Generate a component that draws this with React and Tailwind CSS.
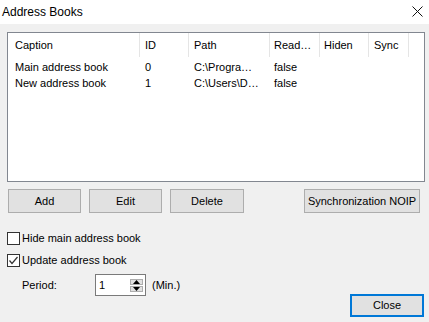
import React from 'react';

const cols = [
  { title: 'Caption', w: 'w-[132px]', pl: 'pl-[7px]' },
  { title: 'ID', w: 'w-[49px]', pl: 'pl-[5px]' },
  { title: 'Path', w: 'w-[81px]', pl: 'pl-[5px]' },
  { title: 'Read…', w: 'w-[50px]', pl: 'pl-[4px]' },
  { title: 'Hiden', w: 'w-[49px]', pl: 'pl-[4px]' },
  { title: 'Sync', w: 'w-[40px]', pl: 'pl-[5px]' },
];

const rows = [
  ['Main address book', '0', 'C:\\Progra…', 'false', '', ''],
  ['New address book', '1', 'C:\\Users\\D…', 'false', '', ''],
];

const Btn = ({ children, className }) => (
  <button className={`flex h-[24px] items-center justify-center border border-[#adadad] bg-[#e1e1e1] text-[11px] text-black ${className}`}>
    {children}
  </button>
);

const Check = ({ checked, label }) => (
  <div className="flex h-[13px] items-center">
    <div className="flex h-[13px] w-[13px] items-center justify-center border border-[#333333] bg-white">
      {checked && (
        <svg width="11" height="11" viewBox="0 0 11 11">
          <path d="M1.5 5.5 L4 8.5 L9.5 2" fill="none" stroke="#333333" strokeWidth="1.2" />
        </svg>
      )}
    </div>
    <span className="ml-[2px] text-[11px] text-black">{label}</span>
  </div>
);

export default function App() {
  return (
    <div className="h-[322px] w-[429px] overflow-hidden bg-[#f0f0f0] font-['Liberation_Sans',Arial,sans-serif] text-black">
      {/* Title bar */}
      <div className="flex h-[24px] items-center justify-between bg-white pl-[2px] pr-[6px]">
        <span className="text-[12px]">Address Books</span>
        <svg width="11" height="11" viewBox="0 0 11 11" className="mb-[1px]">
          <path d="M0.5 0.5 L10.5 10.5 M10.5 0.5 L0.5 10.5" stroke="#111" strokeWidth="1" />
        </svg>
      </div>

      <div className="pl-[7px]">
        {/* List */}
        <div className="mt-[8px] h-[150px] w-[418px] border border-[#828790] bg-white text-[11px]">
          <div className="flex h-[24px]">
            {cols.map((c) => (
              <div key={c.title} className={`flex items-center border-r border-[#e5e5e5] ${c.w} ${c.pl}`}>
                {c.title}
              </div>
            ))}
          </div>
          <div className="pt-[2px]">
            {rows.map((r, i) => (
              <div key={i} className="flex h-[16px]">
                {r.map((cell, j) => (
                  <div key={j} className={`flex items-center ${cols[j].w} ${cols[j].pl}`}>
                    {cell}
                  </div>
                ))}
              </div>
            ))}
          </div>
        </div>

        {/* Buttons */}
        <div className="mt-[7px] flex">
          <Btn className="ml-[1px] w-[73px]">Add</Btn>
          <Btn className="ml-[8px] w-[73px]">Edit</Btn>
          <Btn className="ml-[8px] w-[74px]">Delete</Btn>
          <Btn className="ml-[60px] w-[116px]">Synchronization NOIP</Btn>
        </div>

        {/* Options */}
        <div className="flex">
          <div className="flex-1">
            <div className="mt-[19px]">
              <Check label="Hide main address book" />
            </div>
            <div className="mt-[9px]">
              <Check checked label="Update address book" />
            </div>
            <div className="mt-[7px] flex items-center pl-[15px] text-[11px]">
              <span className="w-[73px]">Period:</span>
              <div className="flex h-[22px] w-[51px] items-center justify-between border border-[#7a7a7a] bg-white pl-[3px] pr-[2px]">
                <span>1</span>
                <div className="flex flex-col gap-[1px]">
                  <div className="flex h-[6px] w-[13px] items-center justify-center border border-[#adadad] bg-[#e1e1e1]">
                    <svg width="7" height="4" viewBox="0 0 7 4"><path d="M3.5 0 L7 4 L0 4 Z" fill="#000" /></svg>
                  </div>
                  <div className="flex h-[6px] w-[13px] items-center justify-center border border-[#adadad] bg-[#e1e1e1]">
                    <svg width="7" height="4" viewBox="0 0 7 4"><path d="M0 0 L7 0 L3.5 4 Z" fill="#000" /></svg>
                  </div>
                </div>
              </div>
              <span className="ml-[6px]">(Min.)</span>
            </div>
          </div>
          <button className="mr-[5px] mt-[81px] flex h-[23px] w-[74px] items-center justify-center border-2 border-[#0078d7] bg-[#e1e1e1] text-[11px]">
            Close
          </button>
        </div>
      </div>
    </div>
  );
}
